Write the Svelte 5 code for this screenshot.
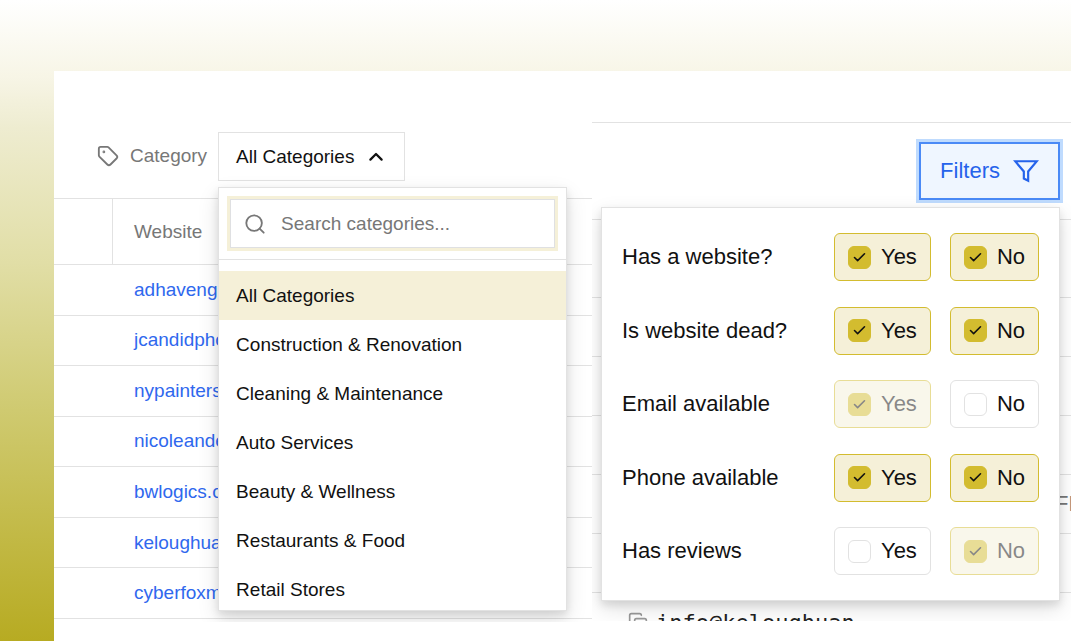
<script>
  let open = $state(true);
  let search = $state("");
  let selected = $state("All Categories");

  const categories = [
    "All Categories",
    "Construction & Renovation",
    "Cleaning & Maintenance",
    "Auto Services",
    "Beauty & Wellness",
    "Restaurants & Food",
    "Retail Stores"
  ];

  const sites = [
    "adhaveng",
    "jcandidpho",
    "nypainters",
    "nicoleande",
    "bwlogics.c",
    "keloughua",
    "cyberfoxm"
  ];

  let filters = $state([
    { label: "Has a website?", yes: true, no: true },
    { label: "Is website dead?", yes: true, no: true },
    { label: "Email available", yes: true, no: false },
    { label: "Phone available", yes: true, no: true },
    { label: "Has reviews", yes: false, no: true }
  ]);

  let shown = $derived(
    categories.filter((c) => c.toLowerCase().includes(search.toLowerCase()))
  );

  // the last ticked option of a filter can't be unticked
  function isLocked(filter, key) {
    return filter[key] && !filter[key === "yes" ? "no" : "yes"];
  }
</script>

<main class="page">
  <div class="sheet">
    <section class="pane">
      <div class="toolbar">
        <span class="toolbar-label" id="category-label">
          <svg class="icon" viewBox="0 0 24 24">
            <path d="M12.586 2.586A2 2 0 0 0 11.172 2H4a2 2 0 0 0-2 2v7.172a2 2 0 0 0 .586 1.414l8.704 8.704a2.426 2.426 0 0 0 3.42 0l6.58-6.58a2.426 2.426 0 0 0 0-3.42z" />
            <circle cx="7.5" cy="7.5" r=".5" fill="currentColor" />
          </svg>
          Category
        </span>
        <div class="picker">
          <button class="picker-button" aria-expanded={open} aria-describedby="category-label" onclick={() => (open = !open)}>
            {selected}
            <svg class="chevron" viewBox="0 0 24 24"><path d="m4.500 15.500 7.500-7.500 7.500 7.500" /></svg>
          </button>
          {#if open}
            <div class="menu">
              <div class="menu-top">
                <label class="search">
                  <svg class="icon" viewBox="0 0 24 24">
                    <circle cx="11" cy="11" r="8.5" />
                    <path d="m21.5 21.5-4.500-4.500" />
                  </svg>
                  <input type="text" placeholder="Search categories..." aria-label="Search categories" bind:value={search} />
                </label>
              </div>
              <div class="menu-list">
                {#each shown as category}
                  <button class="option" class:active={category === selected} onclick={() => (selected = category)}>
                    {category}
                  </button>
                {/each}
              </div>
            </div>
          {/if}
        </div>
      </div>
      <table class="sites">
        <thead>
          <tr><th class="pick"></th><th class="site">Website</th><th></th></tr>
        </thead>
        <tbody>
          {#each sites as site}
            <tr><td></td><td class="site"><a href="#{site}">{site}</a></td><td></td></tr>
          {/each}
        </tbody>
      </table>
    </section>

    <section class="pane right">
      <div class="filter-bar">
        <div class="filter-anchor">
          <button class="filter-button">
            Filters
            <svg class="funnel" viewBox="0 0 24 24"><path d="M22 3H2l8 9.460V19l4 2v-8.540z" /></svg>
          </button>
          <div class="filter-panel">
            {#each filters as filter}
              <div class="filter-row">
                <span class="filter-label">{filter.label}</span>
                {#each ["yes", "no"] as key}
                  <label class="toggle" class:on={filter[key]} class:locked={isLocked(filter, key)}>
                    <input type="checkbox" bind:checked={filter[key]} disabled={isLocked(filter, key)} />
                    <span class="tick">
                      {#if filter[key]}
                        <svg viewBox="0 0 24 24"><path d="M20 6 9 17l-5-5" /></svg>
                      {/if}
                    </span>
                    {key === "yes" ? "Yes" : "No"}
                  </label>
                {/each}
              </div>
            {/each}
          </div>
        </div>
      </div>
      <table class="contacts">
        <thead>
          <tr><th></th><th></th></tr>
        </thead>
        <tbody>
          <tr><td></td><td></td></tr>
          <tr><td></td><td></td></tr>
          <tr><td></td><td></td></tr>
          <tr><td></td><td class="state">FL</td></tr>
          <tr><td></td><td></td></tr>
          <tr>
            <td>
              <span class="email">
                <svg class="copy" viewBox="0 0 24 24">
                  <rect x="8" y="8" width="14" height="14" rx="2" />
                  <path d="M4 16a2 2 0 0 1-2-2V4c0-1.100.9-2 2-2h10a2 2 0 0 1 2 2" />
                </svg>
                info@keloughuan
              </span>
            </td>
            <td></td>
          </tr>
        </tbody>
      </table>
    </section>
  </div>
</main>

<style>
  :global(body) {
    margin: 0;
  }

  .page {
    box-sizing: border-box;
    min-height: 100vh;
    padding: 71px 0 0 54px;
    display: flex;
    background: linear-gradient(#fff, #f7f5e6 12%, #eeecd0 20%, #e1dea6 41%, #cfca70 64%, #b7ab22);
    font-family: "Liberation Sans", Arial, sans-serif;
    font-size: 19px;
    color: #111;
    overflow: hidden;
  }

  .sheet {
    flex: 1;
    min-width: 0;
    display: grid;
    grid-template-columns: 538px minmax(0, 1fr);
    align-items: start;
    background: #fff;
  }

  .pane {
    height: 551px;
    overflow: hidden;
  }

  button,
  input {
    font: inherit;
    color: inherit;
  }

  button {
    cursor: pointer;
  }

  svg {
    fill: none;
    stroke: currentColor;
    stroke-width: 2;
    stroke-linecap: round;
    stroke-linejoin: round;
    flex: none;
  }

  .icon {
    width: 22px;
    height: 22px;
    color: #777;
  }

  /* category toolbar */
  .toolbar {
    box-sizing: border-box;
    height: 127px;
    padding: 61px 0 0 43px;
    display: flex;
    align-items: flex-start;
    gap: 11px;
  }

  .toolbar-label {
    height: 48px;
    display: flex;
    align-items: center;
    gap: 11px;
    color: #777;
  }

  .picker {
    position: relative;
  }

  .picker-button {
    box-sizing: border-box;
    height: 49px;
    padding: 0 19px 0 17px;
    display: flex;
    align-items: center;
    gap: 13px;
    border: 1px solid #e2e2e2;
    background: #fff;
  }

  .chevron {
    width: 18px;
    height: 18px;
    stroke-width: 3;
  }

  .menu {
    box-sizing: border-box;
    position: absolute;
    top: 55px;
    left: 0;
    width: 349px;
    height: 424px;
    overflow: hidden;
    border: 1px solid #e2e2e2;
    background: #fff;
    box-shadow: 0 8px 20px rgba(0, 0, 0, 0.12), 0 4px 8px rgba(0, 0, 0, 0.1);
    z-index: 10;
  }

  .menu-top {
    padding: 11px;
    border-bottom: 1px solid #e2e2e2;
  }

  .search {
    box-sizing: border-box;
    height: 49px;
    padding: 0 13px;
    display: flex;
    align-items: center;
    gap: 15px;
    border: 1px solid #dfe0e2;
    box-shadow: 0 0 0 3px #f5f0d8;
  }

  .search input {
    flex: 1;
    min-width: 0;
    border: none;
    outline: none;
    padding: 0;
    background: transparent;
  }

  .search input::placeholder {
    color: #777;
    opacity: 1;
  }

  .menu-list {
    padding-top: 11px;
  }

  .option {
    display: block;
    width: 100%;
    height: 49px;
    padding: 0 17px;
    border: none;
    background: none;
    text-align: left;
  }

  .option.active {
    background: #f5f0d8;
  }

  /* tables behind the menus */
  table {
    width: 100%;
    border-collapse: separate;
    border-spacing: 0;
    table-layout: fixed;
  }

  th,
  td {
    box-sizing: border-box;
    padding: 0;
    border-bottom: 1px solid #e2e2e2;
    text-align: left;
    font-weight: normal;
  }

  .sites {
    height: 421px;
    border-top: 1px solid #e2e2e2;
  }

  .sites th {
    height: 66px;
    color: #777;
  }

  .sites .pick {
    width: 59px;
    border-right: 1px solid #e2e2e2;
  }

  .sites .site {
    width: 106px;
    padding-left: 21px;
    overflow: hidden;
    white-space: nowrap;
  }

  .sites a {
    color: #2f68ee;
    text-decoration: none;
  }

  /* filters */
  .right {
    height: 550px;
    font-size: 22px;
  }

  .filter-bar {
    box-sizing: border-box;
    height: 98px;
    margin-top: 51px;
    padding: 19px 11px 0 0;
    display: flex;
    justify-content: flex-end;
    align-items: flex-start;
    border-top: 1px solid #e2e2e2;
    border-bottom: 1px solid #e2e2e2;
  }

  .filter-anchor {
    position: relative;
  }

  .filter-button {
    box-sizing: border-box;
    height: 58px;
    padding: 0 19px;
    display: flex;
    align-items: center;
    gap: 13px;
    border: 2px solid #4a8af6;
    background: #eff6ff;
    color: #2563eb;
    box-shadow: 0 0 0 3px #bfdbfe;
  }

  .funnel {
    width: 26px;
    height: 26px;
    stroke-linejoin: miter;
  }

  .filter-panel {
    box-sizing: border-box;
    position: absolute;
    top: 65px;
    right: 0;
    width: 459px;
    height: 394px;
    padding: 25px 20px;
    display: flex;
    flex-direction: column;
    justify-content: space-between;
    border: 1px solid #e2e2e2;
    background: #fff;
    box-shadow: 0 8px 20px rgba(0, 0, 0, 0.12), 0 4px 8px rgba(0, 0, 0, 0.1);
    z-index: 10;
  }

  .filter-row {
    display: flex;
    align-items: center;
    gap: 19px;
  }

  .filter-label {
    flex: 1;
  }

  .toggle {
    box-sizing: border-box;
    height: 48px;
    padding: 0 13px;
    display: flex;
    align-items: center;
    gap: 10px;
    border: 1px solid #e2e2e2;
    border-radius: 6px;
    cursor: pointer;
  }

  .toggle.on {
    border-color: #d3bc2f;
    background: #f5f0d8;
  }

  .toggle.locked {
    opacity: 0.5;
    cursor: default;
  }

  .toggle input {
    position: absolute;
    opacity: 0;
    pointer-events: none;
  }

  .tick {
    box-sizing: border-box;
    width: 23px;
    height: 23px;
    display: flex;
    align-items: center;
    justify-content: center;
    border: 1px solid #e2e2e2;
    border-radius: 6px;
    background: #fff;
  }

  .on .tick {
    border-color: #d3bc2f;
    background: #d3bc2f;
  }

  .tick svg {
    width: 15px;
    height: 15px;
    stroke-width: 2.5;
  }

  .contacts th {
    height: 78px;
  }

  .contacts td {
    height: 59px;
  }

  .contacts th + th {
    width: 16px;
  }

  .contacts .state {
    color: #777;
    white-space: nowrap;
  }

  .email {
    padding-left: 36px;
    display: flex;
    align-items: center;
    gap: 8px;
    font-family: "DejaVu Sans Mono", monospace;
    color: #222;
  }

  .copy {
    width: 20px;
    height: 20px;
    color: #999;
  }
</style>
